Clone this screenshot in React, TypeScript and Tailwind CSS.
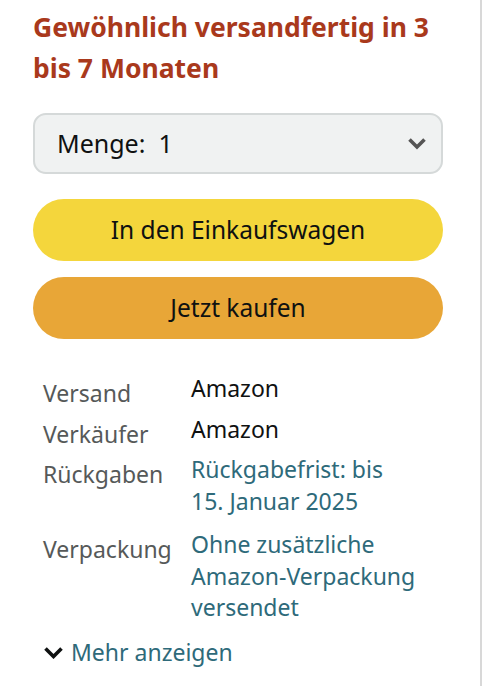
const font = { fontFamily: '"Noto Sans", "Open Sans", Arial, sans-serif' };

type Row = { label: string; value: string[]; link?: boolean; gap: string };

const rows: Row[] = [
  { label: 'Versand', value: ['Amazon'], gap: 'mt-0' },
  { label: 'Verkäufer', value: ['Amazon'], gap: 'mt-[5px]' },
  { label: 'Rückgaben', value: ['Rückgabefrist: bis', '15. Januar 2025'], link: true, gap: 'mt-[4px]' },
  { label: 'Verpackung', value: ['Ohne zusätzliche', 'Amazon-Verpackung', 'versendet'], link: true, gap: 'mt-[12px]' },
];

export default function App() {
  return (
    <div className="flex h-[686px] w-[502px] bg-white" style={font}>
      <div className="w-[482px] border-r-2 border-[#d8d8d8] pl-[33px] pr-[37px]">
        {/* Availability */}
        <h2 className="mt-[7px] text-[26.5px] font-bold leading-[41px] text-[#a9391c]">
          Gewöhnlich versandfertig in 3 bis 7 Monaten
        </h2>

        {/* Quantity */}
        <div className="mt-[24px] flex h-[61px] items-center justify-between rounded-[13px] border-2 border-[#d5d9d9] bg-[#f0f2f2] pl-[22px] pr-[14px]">
          <span className="text-[25px] text-[#0f1111]">Menge:&nbsp; 1</span>
          <svg width="20" height="13" viewBox="0 0 20 13" fill="none">
            <path d="M2.5 2.5l7.5 7.5 7.5-7.5" stroke="#555" strokeWidth="3.6" />
          </svg>
        </div>

        {/* Buttons */}
        <div className="mt-[25px] flex flex-col gap-[16px]">
          <button className="h-[62px] rounded-full bg-[#f4d63c] text-[24.5px] text-[#0f1111]">
            In den Einkaufswagen
          </button>
          <button className="h-[62px] rounded-full bg-[#e8a637] text-[24.5px] text-[#0f1111]">
            Jetzt kaufen
          </button>
        </div>

        {/* Details */}
        <div className="mt-[34px] flex flex-col pl-[10px]">
          {rows.map((r) => (
            <div key={r.label} className={`flex ${r.gap}`}>
              <div className="w-[148px] pt-[5px] text-[23px] leading-[31px] text-[#565959]">{r.label}</div>
              <div className={`text-[23px] leading-[31.5px] ${r.link ? 'text-[#2e6a7a]' : 'text-[#0f1111]'}`}>
                {r.value.map((v) => (
                  <div key={v}>{v}</div>
                ))}
              </div>
            </div>
          ))}
        </div>

        <div className="mt-[13px] flex items-center gap-[7px] pl-[10px]">
          <svg width="21" height="13" viewBox="0 0 21 13" fill="none">
            <path d="M2.5 2.5l8 8 8-8" stroke="#0f1111" strokeWidth="3.6" />
          </svg>
          <span className="text-[23px] leading-[31px] text-[#2e6a7a]">Mehr anzeigen</span>
        </div>
      </div>
    </div>
  );
}
